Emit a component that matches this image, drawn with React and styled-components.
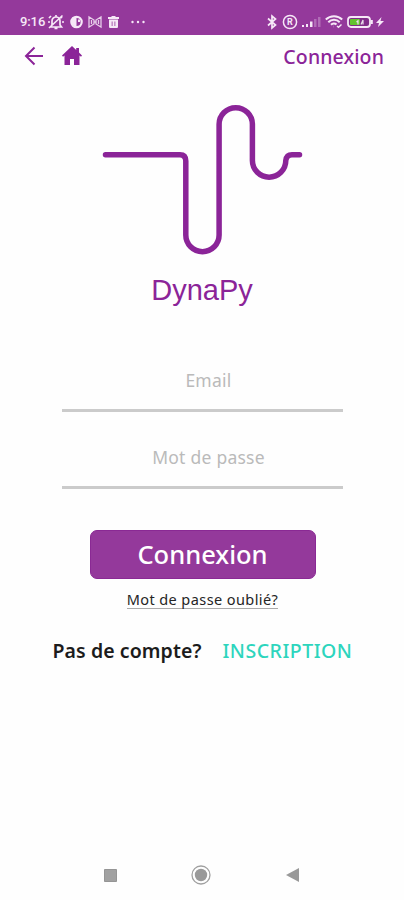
import React from "react";
import styled, { createGlobalStyle } from "styled-components";

const PURPLE = "#94399b";
const INK = "#8b2498";

const GlobalStyle = createGlobalStyle`
  * { box-sizing: border-box; }
  body { margin: 0; background: #fefefe; }
`;

const Screen = styled.main`
  width: 404px;
  height: 900px;
  display: flex;
  flex-direction: column;
  align-items: center;
  overflow: hidden;
  background: #fefefe;
  font-family: "Noto Sans", sans-serif;
`;

const StatusBar = styled.div`
  width: 100%;
  height: 35px;
  flex: none;
  display: flex;
  align-items: center;
  justify-content: space-between;
  padding: 9px 20px 0;
  background: ${PURPLE};
`;

const StatusGroup = styled.div`
  display: flex;
  align-items: center;
  color: #f6e8f7;
`;

const Clock = styled.span`
  width: 27px;
  font: 500 13px/16px Roboto, sans-serif;
  letter-spacing: -0.1px;
  white-space: nowrap;
`;

const Glyph = styled.svg`
  display: block;
  flex: none;
  width: ${(p) => p.$w}px;
  height: ${(p) => p.$h || 16}px;
  margin-left: ${(p) => p.$gap || 0}px;
`;

const BadgeLetter = styled.text`
  font: 700 9px Roboto, sans-serif;
  text-anchor: middle;
  fill: currentColor;
`;

const Header = styled.header`
  width: 100%;
  height: 42px;
  flex: none;
  display: flex;
  align-items: center;
  padding: 0 20px 0 24px;
  color: ${INK};
`;

const Title = styled.h1`
  margin: 1px 0 0 auto;
  font-size: 19.5px;
  font-weight: 500;
  line-height: 28px;
  letter-spacing: ${(p) => p.$track}px;
`;

const Logo = styled.svg`
  display: block;
  flex: none;
  width: 204px;
  height: 156px;
  margin-top: 24px;
`;

const Brand = styled.div`
  height: 34px;
  margin-top: 16px;
  color: ${INK};
  font: 400 29px/34px "Liberation Sans", Arial, sans-serif;
`;

const Form = styled.form`
  width: 281px;
  margin-top: 54px;
  display: flex;
  flex-direction: column;
  align-items: center;
`;

const Field = styled.label`
  width: 100%;
  height: ${(p) => p.$h}px;
  display: flex;
  align-items: flex-end;
  justify-content: center;
  padding: 0 0 17px 13px;
  border-bottom: 3px solid #cbcbcb;
  color: #bababa;
  font-size: 17.5px;
  line-height: 24px;
  letter-spacing: ${(p) => p.$track}px;
`;

const Submit = styled.button`
  width: 226px;
  height: 49px;
  margin: 41px 0 0 1px;
  padding: 0 0 1px;
  border: 1px solid #8a2994;
  border-radius: 7px;
  background: ${PURPLE};
  color: #fff;
  font: 500 25.5px/36px "Noto Sans", sans-serif;
  letter-spacing: ${(p) => p.$track}px;
`;

const Forgot = styled.a`
  margin: 12px 0 0 1px;
  border-bottom: 1px solid #aaa;
  color: #252525;
  font-size: 14.5px;
  line-height: 17px;
  height: 18px;
  white-space: nowrap;
  letter-spacing: ${(p) => p.$track}px;
`;

const SignUp = styled.div`
  width: 300px;
  margin: 28px 0 0 1px;
  display: flex;
  justify-content: space-between;
  font-size: 19.5px;
  line-height: 28px;
`;

const Question = styled.span`
  color: #1c1c1c;
  font-weight: 600;
  letter-spacing: ${(p) => p.$track}px;
`;

const SignUpLink = styled.a`
  color: #2dd5bd;
  font-weight: 500;
  letter-spacing: ${(p) => p.$track}px;
`;

const NavBar = styled.nav`
  width: 195px;
  height: 50px;
  margin: auto 2px 0 0;
  display: flex;
  align-items: center;
  justify-content: space-between;
`;

export default function App() {
  return (
    <Screen>
      <GlobalStyle />
      <StatusBar>
        <StatusGroup>
          <Clock>9:16</Clock>
          <Glyph $w={18} viewBox="0 0 18 16" fill="none" stroke="currentColor" strokeWidth="1.7">
            <path d="M5 11V7a4 4 0 0 1 8 0v4l1.5 2h-11zM7.5 14.5h3M9 1v2M2 14 15.5 1.5M2 4l2-2M1 8h2M15 8h2M15 4l-1-1" />
          </Glyph>
          <Glyph $w={13} $gap={5} viewBox="0 0 13 16">
            <circle cx="6.5" cy="8" r="5.2" fill="none" stroke="currentColor" strokeWidth="2.2" />
            <path d="M2 3.500h4.500V12H4L1.500 10zM8 5.500h2V8H8z" fill="currentColor" />
          </Glyph>
          <Glyph $w={14} $gap={5} viewBox="0 0 14 16" fill="none" stroke="currentColor" strokeWidth="1.300" opacity=".85">
            <path d="M1 3v10l5-3V6zM13 3v10l-5-3V6zM3.5 6v4M10.5 6v4M6 8h2" />
          </Glyph>
          <Glyph $w={11} $gap={6} viewBox="0 0 11 16" fill="currentColor">
            <path d="M0 3h3l1-1h3l1 1h3v2H0z" />
            <path fillRule="evenodd" d="M1 5.500h9v7c0 1-.5 1.500-1.500 1.500h-6C1.500 14 1 13.500 1 12.500zM3.700 7.500v4.500h.8V7.500zM6.500 7.500v4.500h.8V7.500z" />
          </Glyph>
          <Glyph $w={15} $gap={12} viewBox="0 0 15 16" fill="currentColor">
            <circle cx="1.500" cy="8" r="1.200" />
            <circle cx="7" cy="8" r="1.200" />
            <circle cx="12.500" cy="8" r="1.200" />
          </Glyph>
        </StatusGroup>
        <StatusGroup>
          <Glyph $w={10} viewBox="0 0 10 16" fill="none" stroke="currentColor" strokeWidth="1.700">
            <path d="m1 4.500 7.500 6.500L5 14V2l3.500 3L1 11.500" />
          </Glyph>
          <Glyph $w={16} $gap={5} viewBox="0 0 16 16">
            <circle cx="8" cy="8" r="6.600" fill="none" stroke="currentColor" strokeWidth="1.500" />
            <BadgeLetter x="8" y="11.200">R</BadgeLetter>
          </Glyph>
          <Glyph $w={19} $gap={4} viewBox="0 0 19 16" fill="currentColor">
            <path d="M0 11h2v2H0zM4 10h2v3H4zM8 7.500h2.500V13H8z" />
            <path d="M12 5h2.500v8H12zM16 3h2.500v10H16z" opacity=".3" />
          </Glyph>
          <Glyph $w={18} $gap={4} viewBox="0 0 18 16" fill="none" stroke="currentColor" strokeWidth="2">
            <path d="M.8 5.500a12 12 0 0 1 16.400 0M3.300 8.200a8 8 0 0 1 11.400 0M6 10.800a4 4 0 0 1 5.500-.3M8.700 12.500h.2" />
            <path d="m12 12 1.500 1.300L16.500 10.500" strokeWidth="1.400" />
          </Glyph>
          <Glyph $w={27} $gap={4} viewBox="0 0 27 16">
            <rect x="1" y="3" width="22" height="10" rx="3" fill="#812c8a" stroke="currentColor" strokeWidth="1.800" />
            <rect x="3" y="5" width="10" height="6" rx="1" fill="#62c42e" />
            <path d="M11 10.500V6.800L9.500 8M14 10.500 16 6v4.500" fill="none" stroke="#e9dfea" strokeWidth="1.200" />
            <path d="M24.800 6v4" stroke="currentColor" strokeWidth="2" />
          </Glyph>
          <Glyph $w={8} $gap={2} viewBox="0 0 8 16" fill="currentColor">
            <path d="M5.500 3 0 9h3l-1 4 6-6H4.500z" />
          </Glyph>
        </StatusGroup>
      </StatusBar>
      <Header>
        <Glyph $w={20} $h={20} viewBox="0 0 20 20" fill="none" stroke="currentColor" strokeWidth="2">
          <path d="M19 10H2.500M10.500 1.500 2 10l8.500 8.500" />
        </Glyph>
        <Glyph $w={20} $h={20} $gap={18} viewBox="0 0 20 20" fill="currentColor">
          <path d="M10 0 0 9.500l1 1.200 1.500-1.200V19H8v-6h4v6h5.500V9.500l1.500 1.200 1-1.200-3-2.900V2h-2.800v2z" />
        </Glyph>
        <Title $track={0.12}>Connexion</Title>
      </Header>
      <Logo viewBox="100 101 204 156" fill="none" stroke={INK} strokeWidth="5.500" strokeLinecap="round">
        <path d="M105.500 154.700H180Q185.800 154.700 185.800 161V235a16.600 16.600 0 0 0 33.300 0V124.300a16.600 16.600 0 0 1 33.300 0V160.500a16.700 16.700 0 0 0 33.400 0Q286.500 154.700 292 154.700H299.500" />
      </Logo>
      <Brand>DynaPy</Brand>
      <Form onSubmit={(e) => e.preventDefault()}>
        <Field $h={51} $track={0.25}>Email</Field>
        <Field $h={77} $track={0.25}>Mot de passe</Field>
        <Submit $track={0}>Connexion</Submit>
        <Forgot $track={0.42}>Mot de passe oublié?</Forgot>
      </Form>
      <SignUp>
        <Question $track={0.08}>Pas de compte?</Question>
        <SignUpLink $track={0.5}>INSCRIPTION</SignUpLink>
      </SignUp>
      <NavBar>
        <Glyph $w={13} $h={13} viewBox="0 0 13 13">
          <path d="M.5.500h12v12H.500z" fill="#a1a1a1" stroke="#959595" />
        </Glyph>
        <Glyph $w={20} $h={20} viewBox="0 0 20 20">
          <circle cx="10" cy="10" r="9" fill="none" stroke="#a0a0a0" strokeWidth="1.300" />
          <circle cx="10" cy="10" r="6.200" fill="#999" />
        </Glyph>
        <Glyph $w={13} $h={14} viewBox="0 0 13 14" fill="#999">
          <path d="M13 0v14L0 7z" />
        </Glyph>
      </NavBar>
    </Screen>
  );
}
